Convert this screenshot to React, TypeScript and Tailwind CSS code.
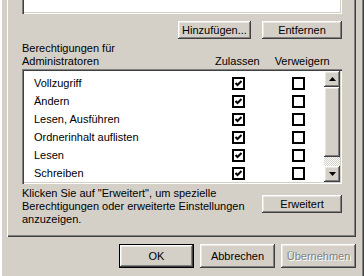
import React from "react";

const raised =
  "bg-[#d4d0c8] shadow-[inset_-1px_-1px_#404040,inset_1px_1px_#fff,inset_-2px_-2px_#808080,inset_2px_2px_#e8e6e1]";

const rights = [
  "Vollzugriff",
  "Ändern",
  "Lesen, Ausführen",
  "Ordnerinhalt auflisten",
  "Lesen",
  "Schreiben",
];

function Btn({
  label,
  className = "",
  disabled = false,
}: {
  label: string;
  className?: string;
  disabled?: boolean;
}) {
  return (
    <div
      className={`flex items-center justify-center ${raised} ${className} ${
        disabled ? "text-[#808080] [text-shadow:1px_1px_0_#fff]" : "text-black"
      }`}
    >
      {label}
    </div>
  );
}

function CheckBox({ checked }: { checked: boolean }) {
  return (
    <div className="w-[13px] h-[13px] border-2 border-black bg-white flex items-center justify-center">
      {checked && (
        <svg width="9" height="9" viewBox="0 0 9 9">
          <polyline
            points="1.5,4 3.5,6 7.5,2"
            fill="none"
            stroke="#000"
            strokeWidth="2"
          />
        </svg>
      )}
    </div>
  );
}

function ScrollBar() {
  return (
    <div className="w-[16px] flex flex-col h-full">
      <div className={`h-[16px] flex items-center justify-center ${raised}`}>
        <svg width="7" height="4" viewBox="0 0 7 4">
          <polygon points="3.5,0 7,4 0,4" fill="#000" />
        </svg>
      </div>
      <div className={`h-[70px] ${raised}`} />
      <div className="flex-1 bg-[image:repeating-conic-gradient(#d4d0c8_0_25%,#fff_0_50%)] bg-[length:2px_2px]" />
      <div className={`h-[16px] flex items-center justify-center ${raised}`}>
        <svg width="7" height="4" viewBox="0 0 7 4">
          <polygon points="0,0 7,0 3.5,4" fill="#000" />
        </svg>
      </div>
    </div>
  );
}

export default function App() {
  return (
    <div className="w-[364px] h-[276px] overflow-hidden bg-[#d4d0c8] text-[11px] leading-[13px] text-black font-['Liberation_Sans',Arial,sans-serif] shadow-[inset_2px_0_#fff,inset_-1px_0_#404040,inset_-2px_0_#808080]">
      <div className="ml-[7px] w-[349px] h-[237px] pl-[15px] pr-[14px] shadow-[inset_1px_0_#fff,inset_-1px_-1px_#404040,inset_-2px_-2px_#808080] flex flex-col">
        <div className="h-[14px] bg-white shadow-[inset_1px_0_#808080,inset_2px_0_#404040,inset_-1px_-1px_#fff,inset_-2px_-2px_#d4d0c8]" />

        <div className="mt-[7px] flex justify-end gap-[11px]">
          <Btn label="Hinzufügen..." className="w-[73px] h-[18px]" />
          <Btn label="Entfernen" className="w-[80px] h-[18px]" />
        </div>

        <div className="mt-[3px] flex items-end">
          <div className="w-[193px]">
            Berechtigungen für
            <br />
            Administratoren
          </div>
          <span>Zulassen</span>
          <span className="ml-[15px]">Verweigern</span>
        </div>

        <div className="mt-[1px] h-[115px] bg-white p-[2px] flex shadow-[inset_1px_1px_#808080,inset_2px_2px_#404040,inset_-1px_-1px_#fff,inset_-2px_-2px_#d4d0c8]">
          <div className="flex-1 pt-[3px] pl-[10px]">
            {rights.map((r, i) => (
              <div key={i} className="h-[18px] flex items-center">
                <span className="w-[198px] whitespace-nowrap">{r}</span>
                <CheckBox checked />
                <div className="ml-[47px]">
                  <CheckBox checked={false} />
                </div>
              </div>
            ))}
          </div>
          <ScrollBar />
        </div>

        <div className="mt-[3px] flex justify-between items-start">
          <div className="whitespace-nowrap">
            Klicken Sie auf "Erweitert", um spezielle
            <br />
            Berechtigungen oder erweiterte Einstellungen
            <br />
            anzuzeigen.
          </div>
          <Btn label="Erweitert" className="mt-[8px] w-[80px] h-[18px]" />
        </div>
      </div>

      <div className="mt-[7px] pr-[8px] flex justify-end gap-[6px]">
        <div className="border border-black">
          <Btn label="OK" className="w-[73px] h-[22px]" />
        </div>
        <Btn label="Abbrechen" className="w-[75px] h-[24px]" />
        <Btn label="Übernehmen" className="w-[75px] h-[24px]" disabled />
      </div>
    </div>
  );
}
